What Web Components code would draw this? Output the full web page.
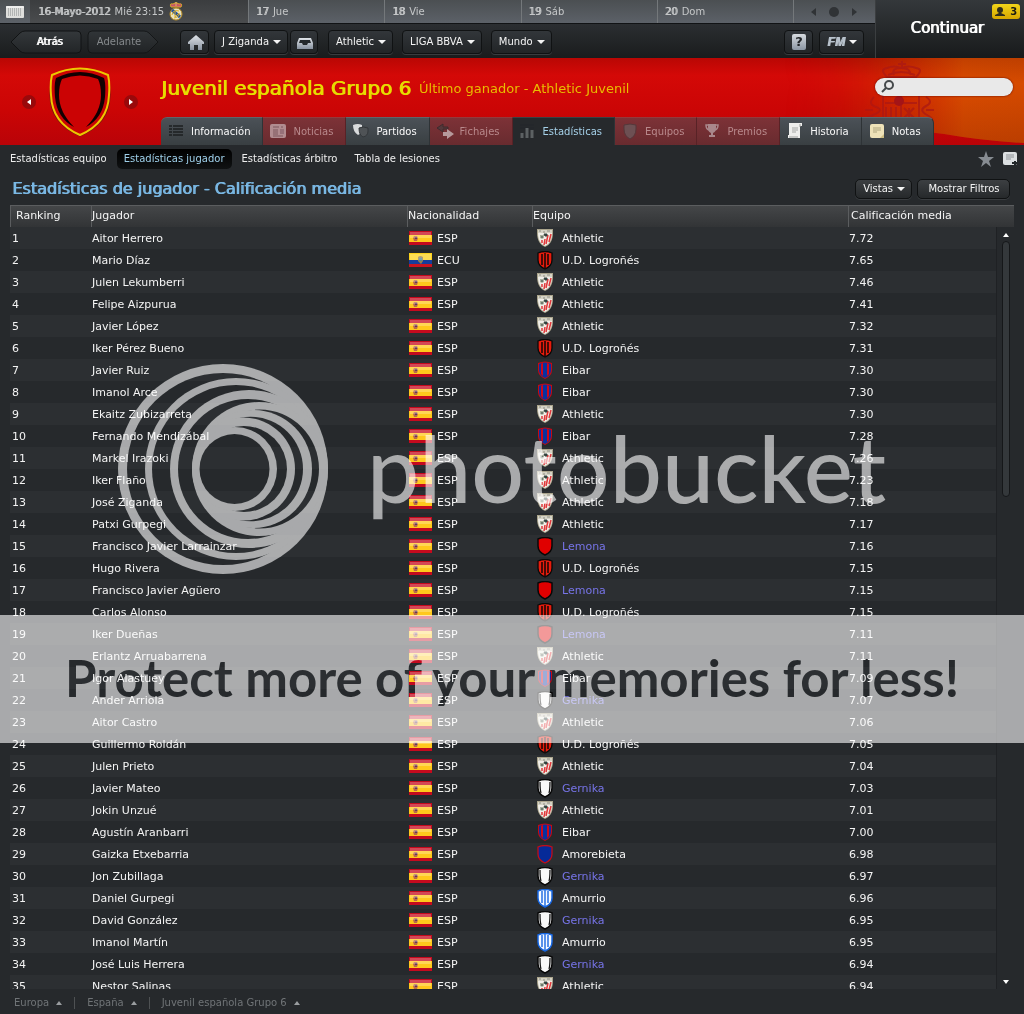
<!DOCTYPE html>
<html lang="es">
<head>
<meta charset="utf-8">
<title>Juvenil española Grupo 6</title>
<style>
    body {
        margin: 0;
        background: #26292c;
        color: #f4f4f4;
        font: 11px/22px "DejaVu Sans", sans-serif;
    }
</style>
</head>
<body>
<league-page></league-page>
<photo-watermark></photo-watermark>

<script>
const crests = {
    'Athletic': `<path d="M0 0h16v4c0 7-3 12-8 14C3 16 0 11 0 4z" fill="#aaa48c"/><path d="M1 2h14v2c0 6-2 11-7 13C3 15 1 10 1 4z" fill="#f1efe9"/><path d="M1 1h14v3H1z" fill="#d5d3c6"/><path d="M2 2h2M6 3h2M10 2h3" stroke="#8d8d82"/><path d="m8 10-1 6M11 6l-2 9M5 11v3M14 5l-2 8" stroke="#e0383a" stroke-width="1.5"/><path d="M3 6h4v3l-2 1-2-1z" fill="#a9b09f"/><path d="M4 8h2M7 5h3v2H8z" stroke="#33433f" fill="#33433f"/>`,
    'U.D. Logroñés': `<path d="M1 2q7-3 14 0v7q0 6-7 9-7-3-7-9z" fill="#e81c0d" stroke="#090909" stroke-width="1.3"/><path d="M5 3v11M8 2v15M11 3v11" stroke="#100605" stroke-width="1.5"/>`,
    'Eibar': `<path d="M1 2q7-3 14 0v7q0 6-7 9-7-3-7-9z" fill="#c50914"/><path d="M2 3q6-3 12 0v6q0 5-6 8-6-3-6-8z" fill="#0931a0"/><path d="M4 3q1-1 2-1v13l-2-2zM10 2l2 1v10l-2 2z" fill="#cf0717"/>`,
    'Lemona': `<path d="M1 2q7-3 14 0v7q0 6-7 9-7-3-7-9z" fill="#e00000" stroke="#080808" stroke-width="1.5"/>`,
    'Gernika': `<path d="M1 2q7-3 14 0v7q0 6-7 9-7-3-7-9z" fill="#f8f8f8" stroke="#080808" stroke-width="1.5"/><path d="M3 3q0 8 1 11M13 3q0 8-1 11" fill="none" stroke="#161616" stroke-width="1.3"/>`,
    'Amorebieta': `<path d="M1 2q7-3 14 0v7q0 6-7 9-7-3-7-9z" fill="#062a98" stroke="#c20d19" stroke-width="1.3"/>`,
    'Amurrio': `<path d="M1 2q7-3 14 0v7q0 6-7 9-7-3-7-9z" fill="#f6f9ff" stroke="#1767e2" stroke-width="1.5"/><path d="M5 2v12M8 1v16M11 2v12" stroke="#1767e2" stroke-width="1.4"/>`
};

const icons = {
    list: `<path d="M1 3h3M5 3h10M1 6h3M5 6h10M1 9h3M5 9h10M1 12h3M5 12h10" stroke="#1c1f21" stroke-width="1.6"/>`,
    news: `<rect x="0" y="1" width="16" height="14" rx="2" fill="#b18c90"/><path d="M3 4h6M3 7h5M3 9h5M3 11h5M3 13h10M11 4h2" stroke="#7d565c"/><path d="M10 6h4v5h-4z" fill="#967179"/>`,
    shields: `<path d="M0 2q5-2 9 0v4q0 4-4 6-5-3-5-10z" fill="#d9dbdc"/><path d="M6 5q4-2 9 0v3q0 5-5 6-4-2-4-9z" fill="#4f5356" stroke="#33373a"/>`,
    transfer: `<path d="M6 1 0 5l6 4V6h5V4H6z" fill="#54383b" stroke="#3f2a2d"/><path d="M10 6v3H6v4h4v3l7-5z" fill="#b6999c"/>`,
    bars: `<path d="M0 2h14M0 5h14" stroke="#22272a"/><path d="M2 10v5M7 5v10M12 7v8" stroke="#5c6163" stroke-width="3"/>`,
    shield: `<path d="M2 2q6-2 12 0v4q0 7-6 10-6-3-6-10z" fill="#6d5053" stroke="#55373a"/>`,
    cup: `<path d="M4 1h8v4q0 4-3 5v2h2v2H5v-2h2v-2Q4 9 4 5z" fill="#a9878b"/><path d="M4 2H2q0 4 3 5M12 2h2q0 4-3 5" fill="none" stroke="#a9878b" stroke-width="1.5"/>`,
    scroll: `<path d="M2 0h13v3h-2v12H1v-3h1z" fill="#eeeeec"/><path d="M13 1v3M2 14h9" stroke="#9c9e9c"/><path d="M5 5h6M5 7h6M5 9h4" stroke="#a4a6a4"/>`,
    note: `<rect x="1" y="1" width="14" height="14" rx="2" fill="#eee2b8"/><path d="M4 5h8M4 7h8M4 9h4" stroke="#aea57f"/><path d="m15 11-4 4h4z" fill="#cdbc82"/>`,
    home: `<path d="m9 1 8 7v2h-2v6h-4v-5H7v5H3v-6H1V8z" fill="url(#g)"/>`,
    inbox: `<path d="M3 4h12l2 5v6H1V9z" fill="url(#g)"/><path d="M4 6h10l1 3h-3l-1 2H7L6 9H3z" fill="#24282b"/>`
};

class VectorIcon extends HTMLElement {
    constructor() {
        super()
        .attachShadow({ mode: 'open' })
        .innerHTML =
            `
            <style>
            :host { display: block; width: 17px; height: 17px; }
            svg { display: block; overflow: visible; }
            </style>
            <svg width="17" height="17" aria-hidden="true">
                <linearGradient id="g" x2="0" y2="1"><stop stop-color="#e0e4e9"/><stop offset="1" stop-color="#88929f"/></linearGradient>
                ${icons[this.getAttribute('name')]}
            </svg>
            `
    }
}

class ClubCrest extends HTMLElement {
    constructor() {
        super().attachShadow({ mode: 'open' });
    }

    connectedCallback() {
        this.shadowRoot.innerHTML =
            `
            <style>
            :host { display: block; width: 16px; height: 19px; }
            svg { display: block; }
            </style>
            <svg width="16" height="19" aria-hidden="true">${crests[this.getAttribute('club')]}</svg>
            `
    }
}

class NationFlag extends HTMLElement {
    constructor() {
        super().attachShadow({ mode: 'open' });
    }

    connectedCallback() {
        const ecuador = this.getAttribute('code') === 'ECU';
        this.shadowRoot.innerHTML =
            `
            <style>
            :host { display: block; width: 23px; height: 14px; }
            svg { display: block; }
            </style>
            <svg width="23" height="14" aria-hidden="true">
                ${ecuador
                    ? `<path d="M0 0h23v14H0z" fill="#fcd21b"/><path d="M0 7h23v4H0z" fill="#163d9c"/><path d="M0 11h23v3H0z" fill="#c9141f"/><path d="M9 4q2-2 5 0v4l-2 3-3-3z" fill="#957e4e"/><path d="M10 5h3v3h-3z" fill="#4b8797"/>`
                    : `<path d="M0 0h23v14H0z" fill="#c40a1e"/><path d="M0 4h23v7H0z" fill="#ffc81c"/><path d="M5 5h3l1 2-1 3H5L4 7z" fill="#b96a4a"/><path d="M6 6h2v2H6z" fill="#613b56"/>`}
                <path d="M1 1h21v6H1z" fill="#fff" opacity=".25"/>
            </svg>
            `
    }
}

class DateBar extends HTMLElement {
    constructor() {
        super()
        .attachShadow({ mode: 'open' })
        .innerHTML =
            `
            <style>
            :host {
                display: grid;
                grid-template-columns: 30px 218px repeat(4, 1fr) 82px;
                height: 23px;
                font-size: 10px;
                line-height: 23px;
                color: #c5c7c8;
                background: linear-gradient(#4b4f52, #5c6168);
                border-bottom: 1px solid #111315;
            }
            .day { padding-left: 7px; border-left: 1px solid #74787b; box-sizing: border-box; }
            .now { background: linear-gradient(#3b3d3f, #4a4c4e); border: 0; padding-left: 8px; display: flex; gap: 4px; }
            b { font-weight: normal; text-shadow: 1px 0 0; margin-right: 1px; }
            .now svg { margin: 2px 0 0 1px; }
            button { border: 0; background: none; padding: 0; display: grid; place-items: center; }
            .arrows { border-left: 1px solid #74787b; display: flex; justify-content: center; gap: 13px; align-items: center; padding-right: 2px; }
            .arrows svg { display: block; }
            </style>
            <button aria-label="Calendario"><svg width="18" height="12"><rect width="18" height="12" rx="1" fill="#dededc"/><path d="M2 3h14M2 5h14M2 7h14M2 9h14" stroke="#85898a" stroke-dasharray="1 1"/><path d="M0 1h18" stroke="#fff"/></svg></button>
            <div class="day now">
                <span><b>16-Mayo-2012</b> Mié 23:15</span>
                <svg width="14" height="19"><circle cx="7" cy="12" r="6" fill="#e9e2bd" stroke="#b68d28"/><path d="m3 8 8 7" stroke="#24529b" stroke-width="3"/><path d="M3 13q1-6 7-4M5 16q6-1 5-5M6 9v6l4-4" fill="none" stroke="#d9ad29"/><path d="M2 5q-2-4 2-3 3-3 6 0 4-1 2 3z" fill="#c95368" stroke="#d9ad29"/><path d="M7 0v4" stroke="#d7bf64"/></svg>
            </div>
            <div class="day"><b>17</b> Jue</div>
            <div class="day"><b>18</b> Vie</div>
            <div class="day"><b>19</b> Sáb</div>
            <div class="day"><b>20</b> Dom</div>
            <div class="arrows">
                <button aria-label="Día anterior"><svg width="5" height="8"><path d="M5 0v8L0 4z" fill="#303336"/></svg></button>
                <button aria-label="Hoy"><svg width="10" height="10"><circle cx="5" cy="5" r="5" fill="#303336"/></svg></button>
                <button aria-label="Día siguiente"><svg width="5" height="8"><path d="M0 0v8l5-4z" fill="#303336"/></svg></button>
            </div>
            `
    }
}

class BarButton extends HTMLElement {
    constructor() {
        super()
        .attachShadow({ mode: 'open' })
        .innerHTML =
            `
            <style>
            :host { display: block; }
            button {
                display: flex;
                align-items: center;
                justify-content: center;
                gap: 4px;
                box-sizing: border-box;
                width: 100%;
                height: 24px;
                padding: 0 6px 0 7px;
                border: 1px solid #101213;
                border-radius: 4px;
                background: linear-gradient(#32363a, #222527);
                box-shadow: 0 1px 0 #393c3f;
                color: #f4f4f4;
                font: 10px/22px "DejaVu Sans", sans-serif;
                white-space: nowrap;
            }
            :host([small]) button { height: 20px; border-radius: 5px; background: linear-gradient(#3c3f42, #26292b); }
            i { display: none; width: 0; height: 0; border: 4px solid transparent; border-top-color: #f4f4f4; border-bottom: 0; }
            :host([menu]) i { display: block; }
            </style>
            <button><slot></slot><i></i></button>
            `
    }
}

class HistoryButton extends HTMLElement {
    constructor() {
        super()
        .attachShadow({ mode: 'open' })
        .innerHTML =
            `
            <style>
            :host { display: block; position: relative; z-index: 0; width: 72px; }
            button {
                width: 100%;
                height: 24px;
                padding: 0 0 0 7px;
                border: 0;
                background: none;
                color: #fff;
                font: 10px/24px "DejaVu Sans", sans-serif;
                text-shadow: 1px 0 0;
            }
            svg { position: absolute; left: 0; top: 0; z-index: -1; }
            :host([forward]) button { padding: 0 8px 0 0; color: #85898c; text-shadow: none; }
            :host([forward]) svg { transform: scaleX(-1); opacity: .8; }
            </style>
            <button><svg width="72" height="24"><linearGradient id="s" x2="0" y2="1"><stop stop-color="#34383b"/><stop offset="1" stop-color="#222527"/></linearGradient><path d="m1 12 9-9q2-2 5-2h52q4 0 4 4v14q0 4-4 4H15q-3 0-5-2z" fill="url(#s)" stroke="#111314"/></svg><slot></slot></button>
            `
    }
}

class GameBar extends HTMLElement {
    constructor() {
        super()
        .attachShadow({ mode: 'open' })
        .innerHTML =
            `
            <style>
            :host { display: grid; grid-template-columns: 1fr 149px; height: 58px; background: #1d2022; }
            .tools {
                display: flex;
                align-items: center;
                box-sizing: border-box;
                height: 34px;
                padding: 2px 11px 0 10px;
                background: linear-gradient(#2b2e31, #1a1c1d);
            }
            .forward { margin: 0 21px 0 5px; }
            .gap { margin-right: 9px; }
            .near { margin-right: 2px; }
            .home { width: 29px; margin-right: 5px; }
            .inbox { width: 28px; margin-right: 10px; }
            .help { width: 29px; margin: 0 6px 0 auto; }
            .fm { width: 45px; }
            .fm em { font: italic bold 12px/22px "Liberation Sans", sans-serif; color: #b8c2cc; text-shadow: 1px 0 0; }
            .help span { width: 15px; height: 16px; border-radius: 2px; background: linear-gradient(#d7dbdf, #8b96a3); color: #202326; font: bold 13px/16px "DejaVu Sans", sans-serif; }
            .go {
                position: relative;
                box-sizing: border-box;
                border: 0;
                border-left: 1px solid #3b3e40;
                background: linear-gradient(#34383b, #181a1b);
                color: #fff;
                padding: 0 6px 2px 0;
                font: 15px/20px "DejaVu Sans", sans-serif;
                text-shadow: 1px 0 0;
            }
            .badge {
                position: absolute;
                top: 4px;
                right: 4px;
                display: flex;
                align-items: center;
                justify-content: space-around;
                width: 28px;
                height: 15px;
                border-radius: 3px;
                background: linear-gradient(#f1d51a, #d7a700);
                color: #1b1b12;
                font: bold 10px/15px "DejaVu Sans", sans-serif;
                text-shadow: none;
            }
            </style>
            <div>
                <date-bar></date-bar>
                <div class="tools">
                    <history-button>Atrás</history-button>
                    <history-button class="forward" forward>Adelante</history-button>
                    <bar-button class="home"><vector-icon name="home"></vector-icon></bar-button>
                    <bar-button class="near" menu>J Ziganda</bar-button>
                    <bar-button class="inbox"><vector-icon name="inbox"></vector-icon></bar-button>
                    <bar-button class="gap" menu>Athletic</bar-button>
                    <bar-button class="gap" menu>LIGA BBVA</bar-button>
                    <bar-button menu>Mundo</bar-button>
                    <bar-button class="help"><span>?</span></bar-button>
                    <bar-button class="fm" menu><em>FM</em></bar-button>
                </div>
            </div>
            <button class="go">Continuar
                <span class="badge"><svg width="10" height="10"><circle cx="5" cy="3" r="3" fill="#302e1c"/><path d="M4 4h2v2l4 2v1H0V8l4-2z" fill="#302e1c"/></svg>3</span>
            </button>
            `
    }
}

class SectionTab extends HTMLElement {
    constructor() {
        super()
        .attachShadow({ mode: 'open' })
        .innerHTML =
            `
            <style>
            :host { display: block; }
            a {
                display: flex;
                align-items: center;
                gap: 7px;
                box-sizing: border-box;
                height: 28px;
                padding: 0 12px 0 7px;
                border-right: 1px solid #2e3336;
                border-top: 1px solid #60656a;
                background: linear-gradient(#4b5157, #393f42);
                color: #fafafa;
                font-size: 10px;
                text-decoration: none;
            }
            vector-icon { width: 16px; }
            :host([off]) a { background: linear-gradient(#7d3237, #682b2f); border-color: #943a3c #582226; color: #b8898c; }
            :host([current]) a { background: #26292c; border-top-color: #3b4144; color: #a5d0e8; }
            :host(:first-child) a { border-top-left-radius: 6px; }
            :host(:last-child) a { border-top-right-radius: 6px; }
            </style>
            <a href="#"><vector-icon name="${this.getAttribute('icon')}"></vector-icon><slot></slot></a>
            `
    }
}

class LeagueHeader extends HTMLElement {
    constructor() {
        super()
        .attachShadow({ mode: 'open' })
        .innerHTML =
            `
            <style>
            :host {
                position: relative;
                z-index: 0;
                display: grid;
                grid-template-columns: 161px 1fr;
                height: 87px;
                background: linear-gradient(#b90704, #d40907 20%, #cb0505 60%, #b90308);
            }
            .art { position: absolute; right: 0; top: 0; z-index: -1; mask-image: linear-gradient(to right, transparent, #000 45%); }
            .crest { display: flex; align-items: center; justify-content: center; gap: 13px; padding-right: 1px; }
            .crest button { width: 14px; height: 14px; border: 0; border-radius: 7px; background: #99090b; padding: 0; display: grid; place-items: center; }
            .main { display: flex; flex-direction: column; justify-content: space-between; min-width: 0; }
            .top { display: flex; align-items: center; gap: 8px; height: 59px; color: #e7dc00; white-space: nowrap; }
            h1 { margin: 0; font-size: 20px; font-weight: normal; line-height: 24px; text-shadow: 1px 0 0; }
            p { margin: 0; font-size: 13px; line-height: 22px; padding-top: 2px; color: #e9bd00; }
            label {
                display: flex;
                align-items: center;
                box-sizing: border-box;
                width: 138px;
                height: 18px;
                margin: 0 11px 2px auto;
                padding-left: 6px;
                border-radius: 9px;
                background: #e9e9e9;
                box-shadow: 0 0 2px #500;
            }
            input { width: 100px; height: 16px; padding: 0 4px; border: 0; outline: 0; background: none; font: 10px "DejaVu Sans", sans-serif; }
            nav { display: flex; }
            </style>
            <svg class="art" width="240" height="87" aria-hidden="true">
                <linearGradient id="o"><stop stop-color="#d53000" stop-opacity="0"/><stop offset=".45" stop-color="#d63900" stop-opacity=".6"/><stop offset=".75" stop-color="#db4c00"/><stop offset="1" stop-color="#d64b00"/></linearGradient>
                <linearGradient id="d" x2="0" y2="1"><stop stop-color="#5a1000" stop-opacity=".2"/><stop offset=".3" stop-color="#5a1000" stop-opacity="0"/><stop offset="1" stop-color="#5a1000" stop-opacity=".22"/></linearGradient>
                <path d="M0 0h240v85q-40-2-80-9-60-8-160-6z" fill="url(#o)"/><path d="M0 0h240v85q-40-2-80-9-60-8-160-6z" fill="url(#d)"/>
                <g fill="none" stroke="#ac1b13" stroke-width="2" opacity=".8">
                    <path d="M118 3v7M114 6h8M103 19q-8-8 0-9 7-3 14 0 8-3 15 0 8 1 0 9zM104 17q13-6 27 0M110 17q-3-7 7-7 10 0 9 7"/>
                    <path d="M99 30h36v35H99zM117 30v35M101 45h32M102 49v14M107 49v14M112 49v14M90 39q-7 7 2 10t-3 8-4 7M142 39q8 5 0 9t1 9 3 7M89 52h-8M142 52h8"/>
                    <path d="m120 50 10 10m0-10-10 10m5-10v12"/>
                </g>
                <circle cx="115" cy="43" r="5" fill="#a41417"/>
            </svg>
            <div class="crest">
                <button aria-label="Anterior"><svg width="4" height="6"><path d="M4 0v6L0 3z" fill="#fff"/></svg></button>
                <svg width="62" height="70" viewBox="0 0 62 70">
                    <path d="M3 8q28-13 56 0 2 8 2 20 0 29-30 41Q1 57 1 28 1 16 3 8z" fill="#cb0304" stroke="#77210a"/>
                    <path d="M3 8q28-13 56 0 2 8 1 20-1 28-29 40Q3 56 2 28 1 16 3 8z" fill="none" stroke="#edc800" stroke-width="2"/>
                    <path d="M7 11q24-12 48 0 2 6 1 19-2 21-19 30 15-15 15-32 0-10-3-16-18-7-36 0-3 6-3 16 0 17 15 32Q8 51 6 30 5 17 7 11z" fill="#120002"/>
                </svg>
                <button aria-label="Siguiente"><svg width="4" height="6"><path d="M0 0v6l4-3z" fill="#fff"/></svg></button>
            </div>
            <div class="main">
                <div class="top">
                    <h1>Juvenil española Grupo 6</h1>
                    <p>Último ganador - Athletic Juvenil</p>
                    <label><svg width="14" height="14"><circle cx="8" cy="5" r="4" fill="none" stroke="#45494b" stroke-width="2"/><path d="m5 8-4 4" stroke="#45494b" stroke-width="2"/></svg><input type="search" aria-label="Buscar"></label>
                </div>
                <nav>
                    <section-tab icon="list">Información</section-tab>
                    <section-tab icon="news" off>Noticias</section-tab>
                    <section-tab icon="shields">Partidos</section-tab>
                    <section-tab icon="transfer" off>Fichajes</section-tab>
                    <section-tab icon="bars" current>Estadísticas</section-tab>
                    <section-tab icon="shield" off>Equipos</section-tab>
                    <section-tab icon="cup" off>Premios</section-tab>
                    <section-tab icon="scroll">Historia</section-tab>
                    <section-tab icon="note">Notas</section-tab>
                </nav>
            </div>
            `
    }
}

class SubMenu extends HTMLElement {
    constructor() {
        super()
        .attachShadow({ mode: 'open' })
        .innerHTML =
            `
            <style>
            :host { display: flex; align-items: center; height: 28px; padding: 0 7px 0 3px; font-size: 10px; }
            a { padding: 0 7px; margin-right: 3px; border-radius: 5px; line-height: 20px; color: #eee; text-decoration: none; }
            a.current { background: linear-gradient(#000, #101213); color: #9fd0ea; }
            div { display: flex; gap: 9px; margin-left: auto; }
            button { padding: 0; border: 0; background: none; height: 16px; }
            svg { display: block; }
            </style>
            <a href="#">Estadísticas equipo</a>
            <a class="current" href="#">Estadísticas jugador</a>
            <a href="#">Estadísticas árbitro</a>
            <a href="#">Tabla de lesiones</a>
            <div>
                <button aria-label="Favorito"><svg width="16" height="16"><path d="m8 0 2 6h6l-5 4 2 6-5-4-5 4 2-6-5-4h6z" fill="#878c92"/></svg></button>
                <button aria-label="Nueva nota"><svg width="14" height="16"><rect y="1" width="14" height="13" rx="2" fill="#dcdfe1"/><path d="M3 4h8M3 6h8M3 8h5" stroke="#8d9296"/><path d="M12 10v5M9 12h5" stroke="#22272a" stroke-width="2"/></svg></button>
            </div>
            `
    }
}

const names = ['Aitor Herrero', 'Mario Díaz', 'Julen Lekumberri', 'Felipe Aizpurua', 'Javier López', 'Iker Pérez Bueno', 'Javier Ruiz',
    'Imanol Arce', 'Ekaitz Zubizarreta', 'Fernando Mendizábal', 'Markel Irazoki', 'Iker Flaño', 'José Ziganda', 'Patxi Gurpegi',
    'Francisco Javier Larrainzar', 'Hugo Rivera', 'Francisco Javier Agüero', 'Carlos Alonso', 'Iker Dueñas', 'Erlantz Arruabarrena',
    'Igor Alastuey', 'Ander Arriola', 'Aitor Castro', 'Guillermo Roldán', 'Julen Prieto', 'Javier Mateo', 'Jokin Unzué',
    'Agustín Aranbarri', 'Gaizka Etxebarria', 'Jon Zubillaga', 'Daniel Gurpegi', 'David González', 'Imanol Martín',
    'José Luis Herrera', 'Nestor Salinas'];
const clubs = { A: 'Athletic', U: 'U.D. Logroñés', E: 'Eibar', L: 'Lemona', G: 'Gernika', B: 'Amorebieta', M: 'Amurrio' };
const played = 'AUAAAUEEAEAAAALULULAEGAUAGAEBGMGMGA';
const ratings = [7.72, 7.65, 7.46, 7.41, 7.32, 7.31, 7.3, 7.3, 7.3, 7.28, 7.26, 7.23, 7.18, 7.17, 7.16, 7.15, 7.15, 7.15, 7.11,
    7.11, 7.09, 7.07, 7.06, 7.05, 7.04, 7.03, 7.01, 7, 6.98, 6.97, 6.96, 6.95, 6.95, 6.94, 6.94];

class RatingTable extends HTMLElement {
    constructor() {
        super()
        .attachShadow({ mode: 'open' })
        .innerHTML =
            `
            <style>
            :host { position: relative; display: block; flex: 1; min-height: 0; margin: 0 10px; overflow: hidden; }
            table { width: 100%; border-collapse: collapse; table-layout: fixed; }
            .rank { width: 81px; }
            .nation { width: 125px; }
            .score { width: 166px; }
            th {
                height: 22px;
                box-sizing: border-box;
                padding: 0 0 0 1px;
                text-align: left;
                font-weight: normal;
                line-height: 22px;
                background: linear-gradient(#454749, #323436);
                box-shadow: inset 0 1px #5b5d5f, inset 1px 0 #5b5d5f;
            }
            th:first-child { padding-left: 6px; }
            th:last-child { padding-left: 3px; }
            td { box-sizing: border-box; height: 22px; padding: 2px 0 0 1px; line-height: 20px; white-space: nowrap; }
            td:first-child { padding-left: 2px; }
            td.mark { padding-top: 0; }
            tbody tr:nth-child(odd) { background: #2c2f32; }
            .cell { display: flex; align-items: center; gap: 5px; height: 22px; padding-left: 1px; }
            .cell span { padding-top: 2px; }
            .club { gap: 9px; padding-left: 4px; }
            .minor { color: #7774e8; }
            .scroll {
                position: absolute;
                top: 22px;
                right: 0;
                bottom: 0;
                display: flex;
                flex-direction: column;
                align-items: center;
                justify-content: space-between;
                width: 18px;
                padding: 6px 0 5px 1px;
                box-sizing: border-box;
                background: #26292c;
                border-left: 1px solid #1f2124;
            }
            .scroll i { width: 6px; height: 254px; margin: 4px 0 auto; border: 1px solid #151719; border-radius: 4px; background: #34383b; }
            .scroll svg { display: block; }
            </style>
            <table>
                <thead><tr><th class="rank">Ranking</th><th>Jugador</th><th class="nation">Nacionalidad</th><th>Equipo</th><th class="score">Calificación media</th></tr></thead>
                <tbody>${names.map((name, i) => this.row(name, i)).join('')}</tbody>
            </table>
            <div class="scroll"><svg width="6" height="4"><path d="m3 0 3 4H0z" fill="#fff"/></svg><i></i><svg width="6" height="4"><path d="m3 4 3-4H0z" fill="#fff"/></svg></div>
            `
    }

    row(name, i) {
        const club = clubs[played[i]];
        const nation = i === 1 ? 'ECU' : 'ESP';
        const minor = club === 'Lemona' || club === 'Gernika' ? 'minor' : '';
        return `<tr>
            <td>${i + 1}</td>
            <td>${name}</td>
            <td class="mark"><div class="cell"><nation-flag code="${nation}"></nation-flag><span>${nation}</span></div></td>
            <td class="mark"><div class="cell club ${minor}"><club-crest club="${club}"></club-crest><span>${club}</span></div></td>
            <td>${ratings[i].toFixed(2)}</td>
        </tr>`;
    }
}

class BreadCrumbs extends HTMLElement {
    constructor() {
        super()
        .attachShadow({ mode: 'open' })
        .innerHTML =
            `
            <style>
            :host { display: flex; align-items: center; box-sizing: border-box; height: 25px; padding: 2px 14px 0; font-size: 10px; line-height: 12px; }
            a { display: flex; align-items: center; gap: 7px; padding-right: 12px; margin-right: 12px; border-right: 1px solid #4e5153; color: #707477; text-decoration: none; }
            a:last-child { border: 0; }
            a::after { content: ""; border: 3px solid transparent; border-bottom: 4px solid #9a9da0; border-top: 0; }
            </style>
            <a href="#">Europa</a><a href="#">España</a><a href="#">Juvenil española Grupo 6</a>
            `
    }
}

class LeaguePage extends HTMLElement {
    constructor() {
        super()
        .attachShadow({ mode: 'open' })
        .innerHTML =
            `
            <style>
            :host { display: flex; flex-direction: column; height: 100vh; overflow: hidden; }
            .heading { display: flex; align-items: center; gap: 5px; height: 32px; padding: 0 14px 0 12px; }
            h2 { margin: 0 auto 0 0; font-size: 16px; font-weight: normal; line-height: 22px; color: #7ab8e4; text-shadow: 1px 0 0; }
            .filter { width: 93px; }
            </style>
            <game-bar></game-bar>
            <league-header></league-header>
            <sub-menu></sub-menu>
            <div class="heading">
                <h2>Estadísticas de jugador - Calificación media</h2>
                <bar-button small menu>Vistas</bar-button>
                <bar-button class="filter" small>Mostrar Filtros</bar-button>
            </div>
            <rating-table></rating-table>
            <bread-crumbs></bread-crumbs>
            `
    }
}

// screen blending lets the black lettering open holes in the band
class PhotoWatermark extends HTMLElement {
    constructor() {
        super()
        .attachShadow({ mode: 'open' })
        .innerHTML =
            `
            <style>
            :host { position: absolute; inset: 0; z-index: 5; overflow: hidden; pointer-events: none; mix-blend-mode: screen; }
            .brand { display: flex; gap: 38px; height: 212px; padding: 363px 0 40px 117px; color: #999; font: 500 93px/208px Lato, sans-serif; }
            svg { display: block; flex: none; }
            .band { height: 128px; background: #999; color: #000; text-align: center; font: bold 51px/126px Lato, sans-serif; white-space: nowrap; }
            </style>
            <div class="brand">
                <svg width="212" height="212" viewBox="117 363 212 212" aria-hidden="true">
                    <circle cx="223" cy="469" r="105" fill="#999"/><circle cx="223" cy="469" r="96"/>
                    <circle cx="236" cy="469" r="91" fill="#999"/><circle cx="236" cy="469" r="84"/>
                    <circle cx="249" cy="469" r="79" fill="#999"/><circle cx="248" cy="469" r="70"/>
                    <circle cx="259" cy="469" r="67" fill="#999"/><circle cx="259.6" cy="469" r="59.4"/>
                    <circle cx="253" cy="469" r="59" fill="#999"/><circle cx="250.7" cy="469" r="52.3"/>
                    <circle cx="243.5" cy="469" r="51.500" fill="#999"/><circle cx="243.9" cy="469" r="43.1"/>
                    <circle cx="235" cy="469" r="42" fill="#999"/><circle cx="234.5" cy="469" r="35"/>
                </svg>
                <span>photobucket</span>
            </div>
            <div class="band">Protect more of your memories for less!</div>
            `
    }
}

window.customElements.define('vector-icon', VectorIcon);
window.customElements.define('club-crest', ClubCrest);
window.customElements.define('nation-flag', NationFlag);
window.customElements.define('date-bar', DateBar);
window.customElements.define('bar-button', BarButton);
window.customElements.define('history-button', HistoryButton);
window.customElements.define('game-bar', GameBar);
window.customElements.define('section-tab', SectionTab);
window.customElements.define('league-header', LeagueHeader);
window.customElements.define('sub-menu', SubMenu);
window.customElements.define('rating-table', RatingTable);
window.customElements.define('bread-crumbs', BreadCrumbs);
window.customElements.define('league-page', LeaguePage);
window.customElements.define('photo-watermark', PhotoWatermark);
</script>
</body>
</html>
